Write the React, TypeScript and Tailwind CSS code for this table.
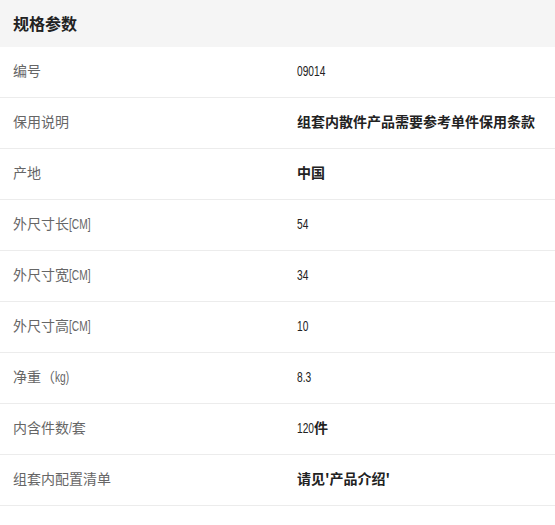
import React from "react";

const rows: { label: string; value: string; bold?: boolean }[] = [
  { label: "编号", value: "09014" },
  { label: "保用说明", value: "组套内散件产品需要参考单件保用条款", bold: true },
  { label: "产地", value: "中国", bold: true },
  { label: "外尺寸长[CM]", value: "54" },
  { label: "外尺寸宽[CM]", value: "34" },
  { label: "外尺寸高[CM]", value: "10" },
  { label: "净重（kg)", value: "8.3" },
  { label: "内含件数/套", value: "120件", bold: true },
  { label: "组套内配置清单", value: "请见'产品介绍'", bold: true },
];

let ctx: CanvasRenderingContext2D | null = null;
function measure(text: string, px: number): number {
  if (typeof document === "undefined") return text.length * px * 0.55;
  if (!ctx) ctx = document.createElement("canvas").getContext("2d");
  if (!ctx) return text.length * px * 0.55;
  ctx.font = `${px}px "Liberation Sans"`;
  return ctx.measureText(text).width;
}

const SCALE = 0.68;

function Narrow({ text }: { text: string }) {
  const w = measure(text, 15);
  return (
    <span
      className="inline-block origin-left scale-x-[0.68] text-[15px] font-normal font-['Liberation_Sans',sans-serif]"
      style={{ marginRight: -(1 - SCALE) * w }}
    >
      {text}
    </span>
  );
}

function Mixed({ text }: { text: string }) {
  const parts = text.match(/[\x20-\x7e]+|[^\x20-\x7e]+/g) || [];
  return (
    <>
      {parts.map((p, i) =>
        /^[\x20-\x7e]+$/.test(p) && p !== "'" ? (
          <Narrow key={i} text={p} />
        ) : (
          <span key={i}>{p}</span>
        )
      )}
    </>
  );
}

export default function App() {
  return (
    <div className="w-[555px] h-[525px] bg-white font-['Noto_Sans_CJK_SC',sans-serif]">
      <div className="h-[47px] bg-[#f5f5f5] flex items-center pl-[13px] pb-[2px]">
        <span className="text-[16px] font-bold text-[#222]">规格参数</span>
      </div>
      {rows.map((r) => (
        <div key={r.label} className="h-[51px] border-b border-[#ececec] flex items-center pb-[4px]">
          <div className="w-[297px] pl-[13px] text-[14px] text-[#666] leading-none">
            <Mixed text={r.label} />
          </div>
          <div className={`text-[14px] text-[#222] leading-none ${r.bold ? "font-bold" : ""}`}>
            <Mixed text={r.value} />
          </div>
        </div>
      ))}
    </div>
  );
}
